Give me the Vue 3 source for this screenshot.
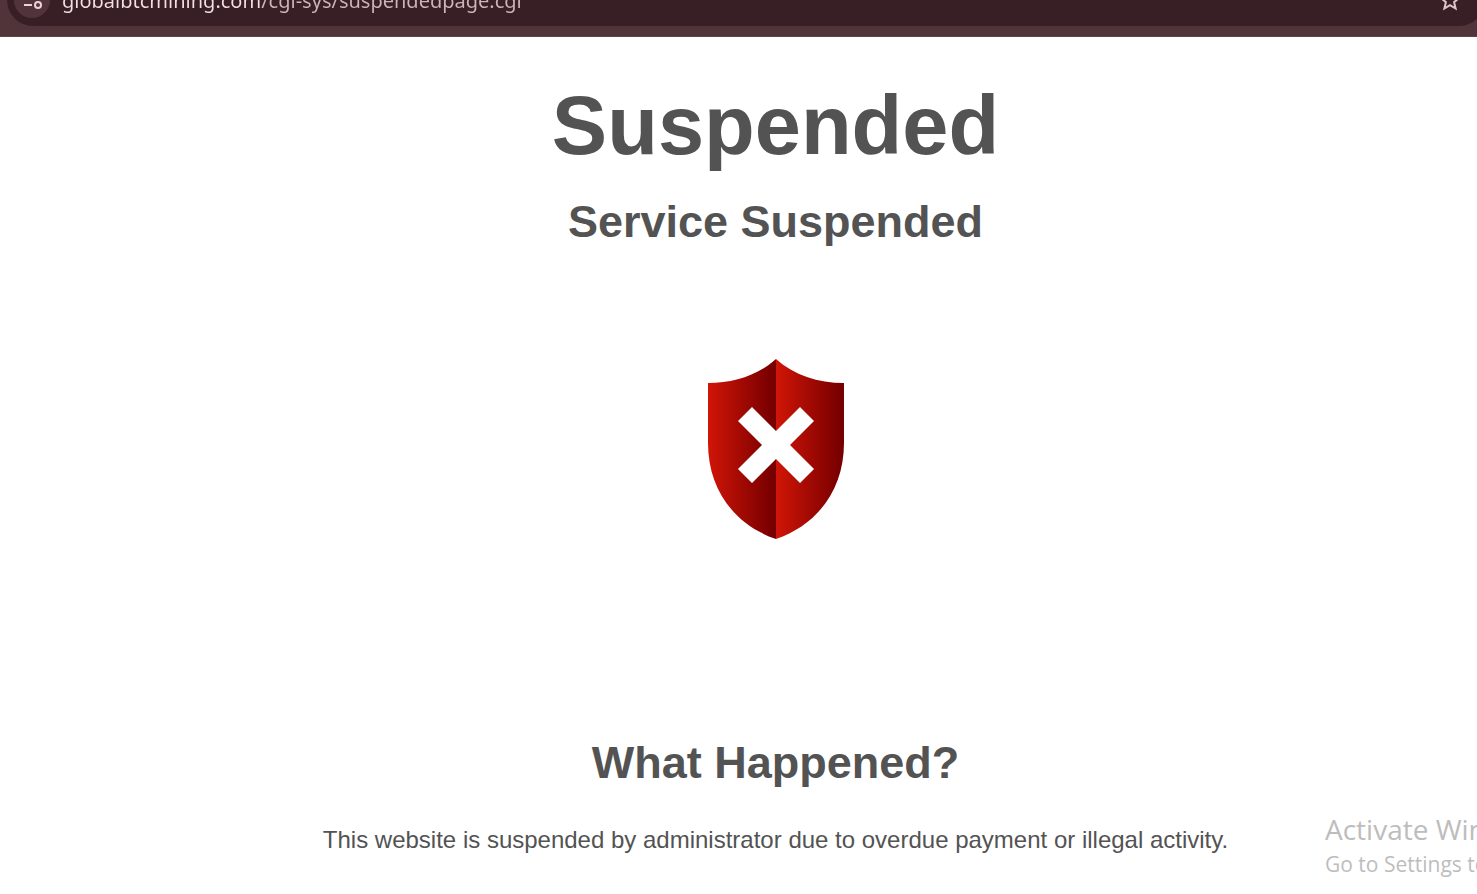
<template>
  <div class="screen">
    <header class="toolbar">
      <div class="address-bar">
        <button class="site-info" type="button" aria-label="View site information">
          <svg width="36" height="36" viewBox="0 0 36 36" fill="none" stroke="#e8d3d8" stroke-width="2">
            <circle cx="13" cy="14" r="3" />
            <path d="M18 14h9" />
            <path d="M10 23h8" />
            <circle cx="24" cy="23" r="3" />
          </svg>
        </button>
        <input v-model="url" class="url" type="text" aria-label="Address" spellcheck="false" />
        <button class="bookmark" type="button" aria-label="Bookmark this page">
          <svg width="24" height="24" viewBox="0 0 24 24" fill="none" stroke="#dcc6cc" stroke-width="2">
            <path d="M12 3.5l2.6 6 6.4.5-4.9 4.2 1.5 6.3-5.6-3.4-5.6 3.4 1.5-6.3L3 10l6.4-.5z" />
          </svg>
        </button>
      </div>
    </header>

    <main class="page">
      <h1>Suspended</h1>
      <h2>Service Suspended</h2>
      <svg class="shield" width="172" height="210" viewBox="0 0 172 210" role="img" aria-label="Suspended">
        <defs>
          <linearGradient id="shade">
            <stop offset="0" stop-color="#d11507" />
            <stop offset="0.1" stop-color="#c71306" />
            <stop offset="0.9" stop-color="#7c0000" />
            <stop offset="1" stop-color="#740000" />
          </linearGradient>
        </defs>
        <path
          d="M86 14C68 30 44 38 18 38V98C18 145 45 180 86 194z"
          fill="url(#shade)"
        />
        <path
          d="M86 14C104 30 128 38 154 38V98C154 145 127 180 86 194z"
          fill="url(#shade)"
        />
        <path
          d="M62 62L86 86L110 62L124 76L100 100L124 124L110 138L86 114L62 138L48 124L72 100L48 76z"
          fill="#fff"
        />
      </svg>
      <h2>What Happened?</h2>
      <p>This website is suspended by administrator due to overdue payment or illegal activity.</p>
    </main>

    <aside class="watermark">
      <div class="watermark-title">Activate Windows</div>
      <div class="watermark-text">Go to Settings to activate Windows.</div>
    </aside>
  </div>
</template>

<script setup>
import { ref } from "vue";

const url = ref("globalbtcmining.com/cgi-sys/suspendedpage.cgi");
</script>

<style scoped>
.screen {
  position: relative;
  min-height: 100vh;
  overflow: hidden;
  background: #fff;
  color: #535353;
  font-family: "Liberation Sans", Arial, sans-serif;
}

.toolbar {
  display: flex;
  align-items: flex-end;
  box-sizing: border-box;
  height: 37px;
  padding: 0 0 10px 7px;
  overflow: hidden;
  background: #513439;
  border-bottom: 1px solid #5d4347;
}

.address-bar {
  display: flex;
  flex: 1;
  align-items: center;
  box-sizing: border-box;
  height: 52px;
  margin-right: -8px;
  padding: 0 23px 0 7px;
  border-radius: 26px;
  background: #381f25;
}

.site-info,
.bookmark {
  display: flex;
  padding: 0;
  border: none;
  background: none;
  cursor: pointer;
}

.site-info {
  border-radius: 50%;
  background: #513439;
}

.url {
  flex: 1;
  height: 40px;
  margin-left: 12px;
  padding: 0;
  border: none;
  outline: none;
  background: linear-gradient(to right, #f3dfe4 198px, #cdb5bb 198px);
  background-clip: text;
  -webkit-text-fill-color: transparent;
  font-family: "Noto Sans", "Open Sans", sans-serif;
  font-size: 20px;
}

.page {
  padding: 41px 0 32px 74px;
  text-align: center;
}

h1 {
  margin: 0;
  font-size: 83px;
  line-height: 96px;
}

h2 {
  margin: 22px 0 35px;
  font-size: 45px;
  line-height: 52px;
}

.shield {
  display: block;
  margin: 97px auto 182px;
}

p {
  margin: 0;
  font-size: 24px;
  line-height: 32px;
}

.watermark {
  position: absolute;
  right: 0;
  bottom: 14px;
  width: 152px;
  overflow: hidden;
  color: #bdbdbd;
  font-family: "Open Sans", "Noto Sans", sans-serif;
  white-space: nowrap;
}

.watermark-title {
  font-size: 28px;
  line-height: 38px;
}

.watermark-text {
  font-size: 21px;
  line-height: 32px;
}
</style>

<style>
body {
  margin: 0;
}
</style>
